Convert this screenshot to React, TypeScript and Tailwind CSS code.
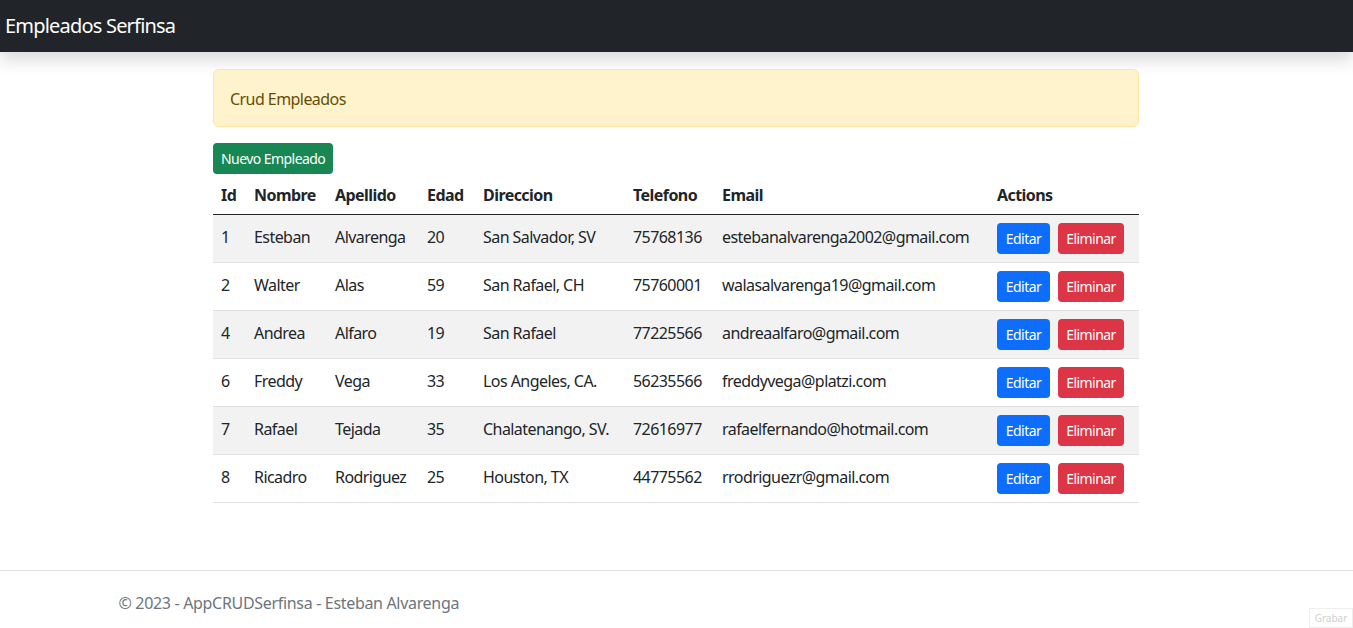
import React from "react";

const rows = [
  { id: 1, nombre: "Esteban", apellido: "Alvarenga", edad: 20, dir: "San Salvador, SV", tel: "75768136", email: "estebanalvarenga2002@gmail.com" },
  { id: 2, nombre: "Walter", apellido: "Alas", edad: 59, dir: "San Rafael, CH", tel: "75760001", email: "walasalvarenga19@gmail.com" },
  { id: 4, nombre: "Andrea", apellido: "Alfaro", edad: 19, dir: "San Rafael", tel: "77225566", email: "andreaalfaro@gmail.com" },
  { id: 6, nombre: "Freddy", apellido: "Vega", edad: 33, dir: "Los Angeles, CA.", tel: "56235566", email: "freddyvega@platzi.com" },
  { id: 7, nombre: "Rafael", apellido: "Tejada", edad: 35, dir: "Chalatenango, SV.", tel: "72616977", email: "rafaelfernando@hotmail.com" },
  { id: 8, nombre: "Ricadro", apellido: "Rodriguez", edad: 25, dir: "Houston, TX", tel: "44775562", email: "rrodriguezr@gmail.com" },
];

export default function App() {
  return (
    <div
      className="relative flex min-h-[628px] flex-col bg-white tracking-[-0.035em] text-[#212529]"
      style={{ fontFamily: '"Noto Sans", "Open Sans", sans-serif' }}
    >
      <nav className="flex h-[52px] items-center bg-[#212529] pl-[5px] shadow-[0_8px_16px_rgba(0,0,0,0.15)]">
        <span className="text-[20px] leading-[30px] tracking-[-0.04em] text-white">Empleados Serfinsa</span>
      </nav>

      <main className="flex-1 pt-[17px]">
        <div className="ml-[213px] w-[926px]">
          <div className="mb-4 flex h-[58px] items-center rounded-[6px] border border-[#ffe69c] bg-[#fff3cd] px-4 pt-[2px] text-[16px] text-[#664d03]">
            Crud Empleados
          </div>

          <button className="h-[31px] rounded-[4px] bg-[#198754] px-2 text-[14px] leading-[21px] text-white">
            Nuevo Empleado
          </button>

          <table className="w-[926px] table-fixed border-collapse text-[16px] leading-6">
            <colgroup>
              <col className="w-[33px]" />
              <col className="w-[81px]" />
              <col className="w-[92px]" />
              <col className="w-[56px]" />
              <col className="w-[150px]" />
              <col className="w-[89px]" />
              <col className="w-[275px]" />
              <col className="w-[150px]" />
            </colgroup>
            <thead>
              <tr className="border-b border-[#212529] text-left font-bold">
                {["Id", "Nombre", "Apellido", "Edad", "Direccion", "Telefono", "Email", "Actions"].map((h) => (
                  <th key={h} className="h-[40px] whitespace-nowrap px-2 pb-[7px] pt-[9px] font-bold">
                    {h}
                  </th>
                ))}
              </tr>
            </thead>
            <tbody>
              {rows.map((r, i) => (
                <tr key={r.id} className={`border-b border-[#dee2e6] ${i % 2 === 0 ? "bg-[#f2f2f2]" : "bg-white"}`}>
                  <td className="h-[48px] whitespace-nowrap px-2 pb-[4px] align-middle">{r.id}</td>
                  <td className="whitespace-nowrap px-2 pb-[4px] align-middle">{r.nombre}</td>
                  <td className="whitespace-nowrap px-2 pb-[4px] align-middle">{r.apellido}</td>
                  <td className="whitespace-nowrap px-2 pb-[4px] align-middle">{r.edad}</td>
                  <td className="whitespace-nowrap px-2 pb-[4px] align-middle">{r.dir}</td>
                  <td className="whitespace-nowrap px-2 pb-[4px] align-middle">{r.tel}</td>
                  <td className="whitespace-nowrap px-2 pb-[4px] align-middle">{r.email}</td>
                  <td className="whitespace-nowrap px-2 align-middle">
                    <div className="flex gap-2">
                      <button className="h-[31px] w-[53px] rounded-[4px] bg-[#0d6efd] text-[14px] leading-[21px] text-white">
                        Editar
                      </button>
                      <button className="h-[31px] w-[66px] rounded-[4px] bg-[#dc3545] text-[14px] leading-[21px] text-white">
                        Eliminar
                      </button>
                    </div>
                  </td>
                </tr>
              ))}
            </tbody>
          </table>
        </div>
      </main>

      <footer className="h-[58px] border-t border-[#dee2e6]">
        <div className="mx-auto w-[1116px] text-[16px] leading-[64px] tracking-[-0.02em] text-[#6c757d]">
          © 2023 - AppCRUDSerfinsa - Esteban Alvarenga
        </div>
      </footer>

      <div className="absolute bottom-0 right-0 flex h-[20px] w-[44px] items-center justify-center border border-[#eeeeee] bg-white text-[10px] tracking-normal text-[#d0d0d0]">
        Grabar
      </div>
    </div>
  );
}
